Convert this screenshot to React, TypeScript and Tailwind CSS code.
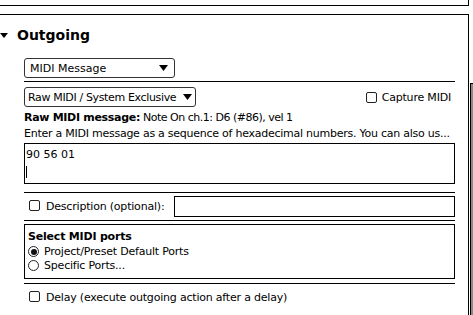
import React from "react";

const font = { fontFamily: '"DejaVu Sans", Verdana, sans-serif' };

function Arrow() {
  return (
    <svg width="9" height="6" viewBox="0 0 9 6" className="shrink-0">
      <path d="M0 0 H9 L4.5 6 Z" fill="#000" />
    </svg>
  );
}

function Checkbox() {
  return <span className="inline-block w-[11px] h-[11px] border border-[#222] rounded-[2px] bg-white shrink-0" />;
}

function Radio({ on }: { on?: boolean }) {
  return (
    <span className="inline-flex items-center justify-center w-[11px] h-[11px] rounded-full border border-[#222] bg-white shrink-0">
      {on && <span className="w-[6px] h-[6px] rounded-full bg-[#111]" />}
    </span>
  );
}

export default function App() {
  return (
    <div className="w-[473px] h-[315px] bg-white overflow-hidden text-[11px] text-black leading-none" style={font}>
      <div className="w-[469px] h-[6px] border-b border-r border-black" />
      <div className="flex mt-[8px]">
        <div className="w-[469px] h-[301px] border-t border-r border-black">
          {/* heading */}
          <div className="flex items-center h-[20px] mt-[10px]">
            <svg width="8" height="5" viewBox="0 0 8 5" className="mt-[1px]">
              <path d="M0 0 H8 L4 5 Z" fill="#000" />
            </svg>
            <span className="ml-[9px] text-[14px] font-bold">Outgoing</span>
          </div>

          <div className="ml-[24px] w-[431px]">
            <div className="flex items-center justify-between w-[151px] h-[20px] border border-[#333] rounded-[3px] px-[5px] mt-[13px]">
              <span>MIDI Message</span>
              <span className="mr-[1px]"><Arrow /></span>
            </div>
            <div className="h-px bg-black mt-[3px]" />

            <div className="flex items-center justify-between mt-[5px]">
              <div className="flex items-center justify-between w-[172px] h-[20px] border border-[#333] rounded-[3px] pl-[3px] pr-[3px] tracking-[-0.35px]">
                <span>Raw MIDI / System Exclusive</span>
                <Arrow />
              </div>
              <div className="flex items-center gap-[5px] mr-[4px] tracking-[-0.2px]">
                <Checkbox />
                <span>Capture MIDI</span>
              </div>
            </div>

            <div className="mt-[5px] whitespace-nowrap">
              <span className="font-bold tracking-[-0.3px]">Raw MIDI message:</span>
              <span className="tracking-[-0.5px]"> Note On ch.1: D6 (#86), vel 1</span>
            </div>
            <div className="mt-[5px] whitespace-nowrap tracking-[-0.25px]">
              Enter a MIDI message as a sequence of hexadecimal numbers. You can also us...
            </div>

            <div className="mt-[4px] h-[41px] border border-black px-px pt-[5px]">
              <div>90 56 01</div>
              <div className="w-px h-[12px] bg-black mt-[6px]" />
            </div>
            <div className="h-px bg-black mt-[8px]" />

            <div className="flex items-center h-[21px] mt-[3px]">
              <span className="ml-[5px]"><Checkbox /></span>
              <span className="ml-[6px] whitespace-nowrap tracking-[-0.2px]">Description (optional):</span>
              <div className="ml-auto w-[281px] h-[21px] border border-black" />
            </div>
            <div className="h-px bg-black mt-[3px]" />

            <div className="mt-[3px] h-[55px] border border-black px-[3px] pt-[6px]">
              <div className="font-bold tracking-[-0.2px]">Select MIDI ports</div>
              <div className="flex items-center gap-[5px] mt-[4px] tracking-[-0.2px]">
                <Radio on />
                <span>Project/Preset Default Ports</span>
              </div>
              <div className="flex items-center gap-[5px] mt-[3px] tracking-[-0.2px]">
                <Radio />
                <span>Specific Ports...</span>
              </div>
            </div>
            <div className="h-px bg-black mt-[4px]" />

            <div className="flex items-center mt-[7px]">
              <span className="ml-[5px]"><Checkbox /></span>
              <span className="ml-[6px] whitespace-nowrap tracking-[-0.2px]">Delay (execute outgoing action after a delay)</span>
            </div>
          </div>
        </div>
        <div className="w-[4px] flex flex-col">
          <div className="h-[69px]" />
          <div className="flex-1 ml-px border-l border-t border-black bg-[#8a8a8a]" />
        </div>
      </div>
    </div>
  );
}
